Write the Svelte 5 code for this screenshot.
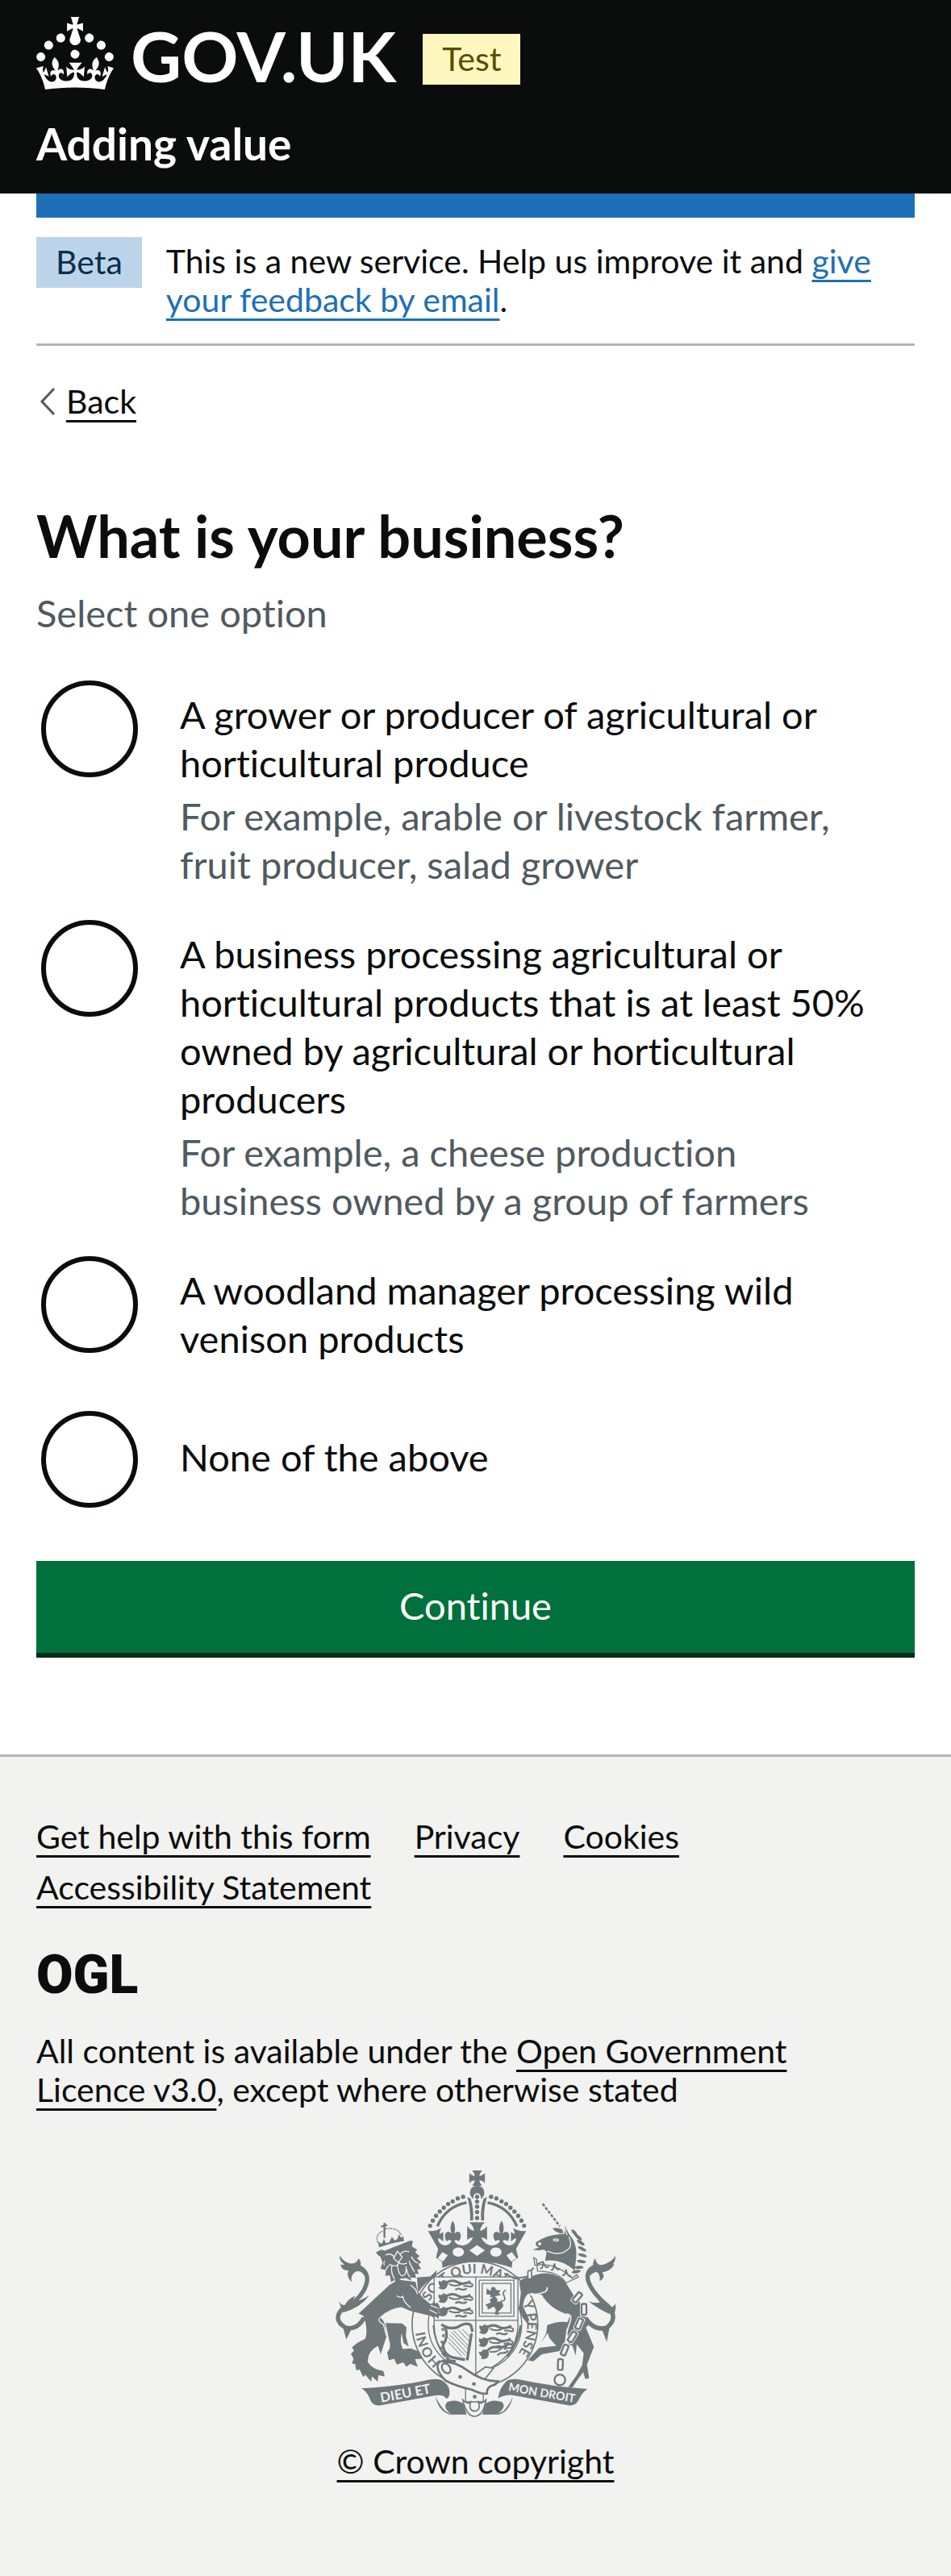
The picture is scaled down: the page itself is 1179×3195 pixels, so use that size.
<script>
  const options = [
    {
      id: 'grower',
      label: 'A grower or producer of agricultural or horticultural produce',
      hint: 'For example, arable or livestock farmer, fruit producer, salad grower',
    },
    {
      id: 'processor',
      label:
        'A business processing agricultural or horticultural products that is at least 50% owned by agricultural or horticultural producers',
      hint: 'For example, a cheese production business owned by a group of farmers',
    },
    { id: 'woodland', label: 'A woodland manager processing wild venison products' },
    { id: 'none', label: 'None of the above' },
  ];
  const links = ['Get help with this form', 'Privacy', 'Cookies', 'Accessibility Statement'];
  const archBeads = [[104, 239], [114, 220], [126, 202], [140, 186], [155, 172], [171, 158], [188, 148], [207, 137], [227, 131]];
  const chainLinks = [[262, 386, 40], [287, 430, 0], [269, 484, 24], [243, 533, 32], [215, 582, 22], [199, 636, 2]];
  const manes = [[252, 146, -40], [266, 162, -50], [275, 182, -55], [280, 205, -62], [281, 229, -72], [277, 252, -82], [268, 274, -92], [258, 290, -100]];
</script>

<header class="header">
  <div class="brand">
    <a class="home" href="#home" aria-label="GOV.UK">
      <svg class="crown" viewBox="0 0 32 30" aria-hidden="true">
        <path fill="currentColor" d="M22.6 10.4c-1 .4-2-.1-2.4-1-.4-.9.1-2 1-2.4.9-.4 2 .1 2.4 1s-.1 2-1 2.4m-5.9 6.7c-.9.4-2-.1-2.4-1-.4-.9.1-2 1-2.4.9-.4 2 .1 2.4 1s-.1 2-1 2.4m10.8-3.7c-1 .4-2-.1-2.4-1-.4-.9.1-2 1-2.4.9-.4 2 .1 2.4 1s0 2-1 2.4m3.3 4.8c-1 .4-2-.1-2.4-1-.4-.9.1-2 1-2.4.9-.4 2 .1 2.4 1s-.1 2-1 2.4M17 4.7l2.3 1.2V2.5l-2.3.7-.2-.2.9-3h-3.4l.9 3-.2.2c-.1.1-2.3-.7-2.3-.7v3.4L15 4.7c.1.1.1.2.2.2l-1.3 4c-.1.2-.1.4-.1.6 0 1.1.8 2 1.9 2.2h.7c1-.2 1.9-1.1 1.9-2.1 0-.2 0-.4-.1-.6l-1.3-4c-.1-.2 0-.2.1-.3m-7.6 5.7c.9.4 2-.1 2.4-1 .4-.9-.1-2-1-2.4-.9-.4-2 .1-2.4 1s0 2 1 2.4m-5 3c.9.4 2-.1 2.4-1 .4-.9-.1-2-1-2.4-.9-.4-2 .1-2.4 1s.1 2 1 2.4m-3.2 4.8c.9.4 2-.1 2.4-1 .4-.9-.1-2-1-2.4-.9-.4-2 .1-2.4 1s0 2 1 2.4m14.8 11c4.4 0 8.6.3 12.3.8 1.1-4.5 2.4-7 3.7-8.8l-2.5-.9c.2 1.3.3 1.9 0 2.7-.4-.4-.8-1.1-1.1-2.3l-1.2 4c.7-.5 1.3-.8 2-.9-1.1 2.5-2.6 3.1-3.5 3-1.1-.2-1.7-1.2-1.5-2.1.3-1.2 1.5-1.5 2.1-.1 1.1-2.3-.8-3-2-2.3 1.9-1.9 2.1-3.5.6-5.6-2.1 1.6-2.1 3.2-1.2 5.5-1.2-1.4-3.2-.6-2.5 1.6.9-1.4 2.1-.5 1.9.8-.2 1.1-1.7 2.1-3.5 1.9-2.7-.2-2.9-2.1-2.9-3.6.7-.1 1.9.5 2.9 1.9l.4-4.3c-1.1 1.1-2.1 1.4-3.2 1.4.4-1.2 2.1-3 2.1-3h-5.4s1.7 1.9 2.1 3c-1.1 0-2.1-.2-3.2-1.4l.4 4.3c1-1.4 2.2-2 2.9-1.9-.1 1.5-.2 3.4-2.9 3.6-1.9.2-3.4-.8-3.5-1.9-.2-1.3 1-2.2 1.9-.8.7-2.3-1.2-3-2.5-1.6.9-2.2.9-3.9-1.2-5.5-1.5 2-1.3 3.7.6 5.6-1.2-.7-3.1 0-2 2.3.6-1.4 1.8-1.1 2.1.1.2.9-.3 1.9-1.5 2.1-.9.2-2.4-.5-3.5-3 .6 0 1.2.3 2 .9l-1.2-4c-.3 1.1-.7 1.9-1.1 2.3-.3-.8-.2-1.4 0-2.7l-2.9.9C1.3 23 2.6 25.5 3.7 30c3.7-.5 7.9-.8 12.3-.8" />
      </svg>
      <span class="wordmark">GOV.UK</span>
    </a>
    <strong class="tag tag-test">Test</strong>
  </div>
  <a class="service" href="#service">Adding value</a>
</header>

<div class="container">
  <div class="bar"></div>
  <div class="phase">
    <strong class="tag tag-beta">Beta</strong>
    <p>This is a new service. Help us improve it and <a class="link-blue" href="#feedback">give your feedback by email</a>.</p>
  </div>

  <a class="back" href="#back">
    <svg viewBox="0 0 22 36" aria-hidden="true"><path d="M19 2 4 18l15 16" fill="none" stroke="#505a5f" stroke-width="3" /></svg>
    <span>Back</span>
  </a>

  <main>
    <form onsubmit={(e) => e.preventDefault()}>
      <fieldset aria-describedby="business-hint">
        <legend><h1>What is your business?</h1></legend>
        <p class="hint" id="business-hint">Select one option</p>
        <div class="radios">
          {#each options as option}
            <div class="option">
              <input type="radio" name="business" id={option.id} aria-describedby={option.hint ? `${option.id}-hint` : undefined} />
              <div class="option-text" class:single={!option.hint}>
                <label for={option.id}>{option.label}</label>
                {#if option.hint}<div class="hint" id="{option.id}-hint">{option.hint}</div>{/if}
              </div>
            </div>
          {/each}
        </div>
      </fieldset>
      <button type="submit">Continue</button>
    </form>
  </main>
</div>

<footer class="footer">
  <ul class="footer-links">
    {#each links as link}<li><a href="#footer">{link}</a></li>{/each}
  </ul>
  <div class="ogl">OGL</div>
  <p class="licence">All content is available under the <a href="#licence">Open Government Licence v3.0</a>, except where otherwise stated</p>

  <a class="copyright" href="#crown">
    <svg class="crest" viewBox="50 60 1046 922" aria-hidden="true">
      <defs>
        <g id="passant">
          <path class="ink" d="M4 6q8 4 12 2 6-10 12-2 12-2 10 12-2 16-14 20-14 2-22-6 8-2 6-8-6-4-4-18z" />
          <path class="line" stroke-width="9" d="M34 12q22-12 42 0t46-4" />
          <path class="line" stroke-width="6" d="M42 18q28 14 52-2 16-6 34 2 6 10-6 10-14-4-26-2" />
          <path class="line" stroke-width="7" d="M66 40q10-8 22-2 14 4 20-4" />
        </g>
        <g id="half-crown">
          {#each archBeads as [x, y]}<circle class="ink" cx={x} cy={y} r="8" />{/each}
          <path class="line" stroke-width="10" d="M131 241Q162 168 240 153" />
          <path class="ink" d="M242 132l13 6q12 35 9 81h-11q2-50-11-87z" />
          <path class="ink" d="M96 258Q122 262 146 248 138 262 140 270L153 262V298Q142 286 133 286 136 310 158 312 176 312 184 296 174 288 166 297 156 286 161 268 172 254 184 268 174 240 188 220 202 240 194 268 208 254 217 268 222 286 210 297 202 288 194 296 204 314 228 312 252 308 264 282 252 282 242 292V240Q255 256 268 258 266 240 250 226H280V372Q200 374 150 396L148 372 126 358 134 325Z" />
          <ellipse class="paper" cx="209" cy="337" rx="21" ry="17" />
          <path class="paper" d="M150 337l20 12-18 23-20-12z" />
        </g>
        <path id="garter-left" d="M445 776A188 188 0 0 1 418 526" />
        <path id="garter-top" d="M402 552A188 188 0 0 1 740 552" />
        <path id="garter-right" d="M748 556A190 190 0 0 1 600 824" />
        <path id="motto-left" d="M222 927Q330 908 440 886" />
        <path id="motto-right" d="M694 883Q820 908 970 932" />
      </defs>

      <g class="garter">
        <circle cx="571" cy="636" r="234" class="outline" stroke-width="5" />
        <circle cx="571" cy="636" r="174" class="outline" stroke-width="4" />
        <path class="line" stroke-width="9" d="M418 640Q420 700 462 758M742 640Q730 710 690 755" />
        <text><textPath href="#garter-left">HONI</textPath></text>
        <text><textPath href="#garter-top">SOIT QUI MAL</textPath></text>
        <text><textPath href="#garter-right">Y PENSE</textPath></text>
      </g>

      <g class="shield">
        <path class="outline" stroke-width="4" d="M419 460H731V640Q728 770 574 824 422 770 419 640Z" />
        <path class="line" stroke-width="4" d="M574 460V822M419 621H731" />
        <use href="#passant" x="432" y="468" />
        <use href="#passant" x="432" y="518" />
        <use href="#passant" x="432" y="568" />
        <use href="#passant" x="584" y="634" />
        <use href="#passant" x="582" y="682" />
        <use href="#passant" x="580" y="734" transform="rotate(-18 580 734)" />
        <path class="line" stroke-width="4" d="M587 472H716V606H587ZM598 484H705V594H598Z" />
        <path class="ink" d="M615 502l14 10 4-14q16-4 16 10l18 2-8 10 10 6-24 6q14 8 8 20l18-2 6 18-10 12-10 10 4 10h-16l4-18-8-12-22 12-2-12-8-6 22-10-6-8 14-12-12 2 2-10-16-2z" />
        <path class="line" stroke-width="5" d="M668 548q20 4 12-16-10-16 6-24" />
        <path class="line" stroke-width="10" d="M446 636Q476 658 508 646 540 626 556 640L562 664M460 646Q474 684 452 712 454 756 500 762L534 768M558 670L542 770" />
        <path class="line" stroke-width="9" stroke-dasharray="10 14" d="M450 650Q460 684 442 714 446 764 500 776" />
        <path class="line" stroke-width="3" d="M492 660l56 58M482 664l64 66M476 674l66 70M472 686l62 66M472 702l50 54M508 656l44 46M524 654l30 32" />
      </g>

      <g transform="translate(300 30)">
        <path class="ink" d="M261 33h37c-7 8-10 14-10 21 7-1 13-4 20-11v37c-7-7-13-10-20-10 0 7 3 13 10 20h-38c7-7 10-13 10-20-7 0-13 3-20 10V43c7 7 13 10 20 11 0-7-3-13-9-21z" />
        <circle class="ink" cx="279" cy="116" r="27" />
        <path class="paper" d="M265 220V132a14 14 0 0 1 28 0v88z" />
        {#each [131, 149, 168, 188, 210] as y}<circle class="ink" cx="279" cy={y} r="8" />{/each}
        <use href="#half-crown" />
        <use href="#half-crown" transform="translate(558 0) scale(-1 1)" />
        <path class="paper" d="M279 311l29 20-29 20-29-20z" />
      </g>

      <g transform="translate(30 240)">
        <path class="line" stroke-width="16" d="M128 372Q102 420 58 408 12 380 44 342 104 312 128 268 160 205 104 186" />
        <path class="ink" d="M37 140q14 24 40 30 26 0 30-20 12 12 8 26 34 20 31 50-22-34-50-26-20 14-14 38-22-20-12-42-30-2-29-24 8 4 14 2-20-14-18-34zM33 310q10 16 24 14 12-24 38-34-8 14-10 22 34-4 63-24-34 48-98 64zM50 408l12 44 18-36z" />
        <path class="ink" d="M325 222l50-4 24-24-4 24q-42 22-66 60z" />
        <path class="ink" d="M208 391l62 2 16 14-2 34 10 38-19-13-7-36q-8 34 4 58l30-2 32 12 12 26-28 2 10 28-28-10-14 10-12-16-24 8-10-22-20 6-6-30q14-14 10-34z" />
        <path class="ink" d="M222 250l33-20 65 8 8 38q20 26 46 44l28-4 8 14-6 12 6 16-6 18-10-10-6 6-12-8-36-8-40-10-32-14q-46 4-82 38 16 8 20 30l6 40-22 68-10-32q-40 20-38 60 16 28 58 34l5 20-24-4-2 24-22-20-2 20-22-26-8 8-14-28-12 4-4-24-12-2 6-18-10-18 12-12-8-12q18-18 50-32 8-24 0-64l-8-22-17-8z" />
        <path class="cut" stroke-width="4" d="M250 290q14 10 22 2 4 24 30 42M300 250q24 14 26 34M186 372q-8 14 14 24l12 44M376 326l26 10M372 342l28 14" />
        <path class="ink" d="M172 128l20-10 13 4 95-38 10 2-4 20 20 12-8 10 17 14-10 8 16 15-11 7 11 18-15 2 6 18-14-3 4 16-22-1 5 12-20-10-22 2-12 22-9-17-13 8-5-25-20 2 3-22-18-5 8-23-8-22q-12-4-18-20z" />
        <path class="cut" stroke-width="4" d="M208 138q22-10 34 10M262 136q14-18 34-10M238 150l14-26 18 22-14 20zM222 172q28 16 36-6 10 10 30 2M252 172q4 40 18 44 18-4 14-36M232 178q-6 24 10 50M222 176q-18 14-16 40M296 160q8 24 20 40M304 144q10 20 26 24M286 190q4 20 12 30M204 160q-4 10 0 16" />
        <path class="ink" d="M184 110l-4-22 14 8 8-18 8 16 12-4 10-20 10 14 10-6 6-18 8 14 8-6 3 18q-50 8-93 24z" />
        <path class="line" stroke-width="5" stroke-dasharray="5 4" d="M178 90q-8-34 24-42M208 40q44-6 60 24" />
        <path class="line" stroke-width="7" d="M204 18v56M192 32l22-6" />
      </g>

      <g transform="translate(690 150)">
        <path class="line" stroke-width="16" d="M292 462Q326 514 372 498 410 470 386 428 300 356 300 306 304 270 350 276" />
        <path class="ink" d="M329 240q4 26 24 25 34-8 52-34-2 24-12 32 6 0 8-2-12 26-46 32 14 20-10 32 4-26-12-34-24 6-38 36-8-46 26-62-2-14 8-25zM303 400q24 10 44 4-8-6-10-14 34 6 54 34l13-14q4 24-8 42-40-12-93-52zM354 506l18 46 10-56z" />
        <path class="line" stroke-width="8" stroke-dasharray="11 6" d="M133 37l64 84" />
        <path class="ink" d="M170 128q18-4 36 4l4 16q-30 0-40-20z" />
        <path class="ink" d="M108 180Q150 152 200 150L214 150 216 120 234 154Q262 184 258 236L252 286Q200 240 142 250L148 216 138 208 118 210 95 208 120 200Q104 194 108 180Z" />
        {#each manes as [x, y, a]}<ellipse class="ink" cx={x} cy={y} rx="6" ry="17" transform="rotate({a} {x} {y})" />{/each}
        <circle class="paper" cx="122" cy="186" r="6" />
        <path class="cut" stroke-width="4" d="M172 172q10-8 20 0-8 8-20 0M150 214q54 22 84-14 8-20-4-40M216 128l8 26" />
        <path class="ink" d="M46 330q10-20 44-20 20-14 60-14 50 6 72 40l28 44q30 24 32 56l22 52-10 10q14 36 30 72l-26 66 8 50-14 4-8-26-22 30-18 28-16-2 30-42 22-40 6-44-26-34-4 42-12-36-14-4-8-76 14-34q-74-20-106-76l-46-8q-22 14-24 52l22 46-2 22-22-28-14-30 8-62z" />
        <path class="ink" d="M150 490q36-16 76-12l-12 84-18 24-66 12-32 26-20-4 18-20 24-26 64-8-26-28-6-20-24 36 18-34z" />
        <path class="cut" stroke-width="5" d="M84 376q30 0 60-12 8-8 6-16M222 446q22 4 14 28l-14 44" />
        <path class="outline" stroke-width="4" d="M100 238l10 6 4 44q78 0 106 44l46-22-6-8-18 12q-60-60-138-48z" />
        <path class="line" stroke-width="6" d="M112 262l24-10M124 276q8 8 12-20 8 26 20 14M164 282q10 8 12-22 6 28 22 20M206 302q12 6 14-20 4 28 20 24M-10 296l40 20 60-10M84 290l16-14" />
        <rect class="outline" stroke-width="5" x="78" y="286" width="14" height="32" rx="6" />
        {#each chainLinks as [x, y, a]}
          <g transform="rotate({a} {x} {y})">
            <rect class="paper" x={x - 15} y={y - 26} width="30" height="52" rx="8" />
            <rect class="outline" stroke-width="7" x={x - 9} y={y - 20} width="18" height="40" rx="5" />
          </g>
        {/each}
        <circle class="outline" stroke-width="7" cx="197" cy="693" r="20" />
      </g>

      <g>
        <path class="ink" d="M424 905Q436 962 478 972H540L528 932Q500 912 468 926 448 946 482 970L462 960Q440 940 424 905ZM712 905Q700 962 660 972H598L610 932Q638 912 672 926 690 946 654 970L676 960Q698 940 712 905Z" />
        <path class="outline" stroke-width="4" d="M536 860H602V925H536Z" />
        <path class="outline" stroke-width="5" d="M526 918Q540 980 570 979 602 978 612 918 600 930 588 930L582 922Q596 956 570 960 544 956 556 922L550 930Q538 930 526 918Z" />
        <path class="outline" stroke-width="5" d="M572 822L610 795 640 800 600 850Z" />
        <path class="outline" stroke-width="8" d="M452 776Q500 776 540 806 600 850 656 848 650 862 634 864 614 872 616 894 596 898 560 880 500 866 462 846 424 808 434 782 450 764 500 774" />
        <ellipse class="outline" stroke-width="7" cx="464" cy="800" rx="14" ry="20" transform="rotate(-35 464 800)" />
        <circle class="ink" cx="516" cy="832" r="7" /><circle class="ink" cx="567" cy="858" r="7" /><circle class="ink" cx="570" cy="906" r="7" />
        <path class="ink" d="M148 875Q290 868 400 842 436 836 450 846 480 866 476 892 478 906 464 914 456 896 420 902L220 938Q192 942 182 920 172 888 148 875Z" />
        <path class="ink" d="M990 877Q860 868 740 842 706 836 690 846 662 872 657 912 690 894 720 902L918 938Q944 942 956 920 968 892 990 877Z" />
        <text class="motto"><textPath href="#motto-left">DIEU ET</textPath></text>
        <text class="motto motto-small"><textPath href="#motto-right">MON DROIT</textPath></text>
      </g>
    </svg>
    <span>© Crown copyright</span>
  </a>
</footer>

<style>
  :global(body) {
    background: #fff;
    color: #0b0c0c;
    font-family: Lato, "Open Sans", sans-serif;
    font-size: 41px;
    line-height: 48px;
    font-variant-ligatures: none;
  }
  p, h1, ul { margin: 0; padding: 0; }
  a {
    color: inherit;
    text-decoration-thickness: 3px;
    text-underline-offset: 8px;
  }
  .header {
    background: #0b0c0c;
    color: #fff;
    padding: 21px 45px 27px;
  }
  .brand { display: flex; align-items: flex-start; gap: 33px; }
  .home { display: flex; gap: 21px; color: #fff; text-decoration: none; }
  .crown { width: 96px; height: 90px; display: block; }
  .wordmark { font-size: 87px; line-height: 84px; font-weight: 700; padding-top: 6px; }
  .tag { font-weight: 400; padding: 7px 24px 8px; line-height: 48px; }
  .tag-test { background: #fff7bf; color: #594d00; margin-top: 21px; }
  .tag-beta { background: #bbd4ea; color: #0c2d4a; }
  .service {
    display: block;
    width: fit-content;
    margin-top: 33px;
    font-size: 55px;
    line-height: 69px;
    font-weight: 700;
    text-decoration: none;
  }
  .container { padding: 0 45px; }
  .bar { height: 30px; background: #1d70b8; }
  .phase {
    display: flex;
    align-items: flex-start;
    gap: 30px;
    padding: 24px 0 30px;
    border-bottom: 3px solid #b1b4b6;
  }
  .phase p { padding-top: 6px; }
  .link-blue { color: #1d70b8; }
  .back {
    display: flex;
    width: fit-content;
    align-items: center;
    gap: 12px;
    margin-top: 45px;
    text-decoration: none;
  }
  .back svg { width: 22px; height: 36px; margin-left: 3px; }
  .back span { text-decoration: underline 3px; text-underline-offset: 8px; }
  main { padding: 105px 0 120px; }
  fieldset { border: 0; margin: 0; padding: 0; min-width: 0; }
  legend { padding: 0; display: block; }
  h1 { font-size: 72px; line-height: 75px; font-weight: 700; }
  .hint { color: #505a5f; font-size: 47px; line-height: 60px; }
  fieldset > .hint { margin-top: 28px; }
  .radios { display: flex; flex-direction: column; gap: 30px; margin-top: 48px; }
  .option { display: flex; align-items: flex-start; gap: 52px; }
  input {
    appearance: none;
    flex: none;
    box-sizing: border-box;
    width: 120px;
    height: 120px;
    margin: 6px 0 6px 6px;
    border: 6px solid #0b0c0c;
    border-radius: 50%;
    background: #fff;
  }
  .option-text {
    flex: 1;
    box-sizing: border-box;
    min-height: 132px;
    display: flex;
    flex-direction: column;
    justify-content: center;
    gap: 6px;
    padding: 18px 45px 3px 0;
  }
  .option-text.single { padding-bottom: 24px; }
  label { font-size: 47px; line-height: 60px; }
  button {
    display: block;
    width: 100%;
    margin-top: 60px;
    padding: 22px 30px 32px;
    border: 0;
    box-shadow: inset 0 -6px 0 #002d18;
    background: #00703c;
    color: #fff;
    font: inherit;
    font-size: 47px;
    line-height: 66px;
  }
  .footer {
    background: #f2f2f0;
    border-top: 3px solid #b1b4b6;
    padding: 75px 45px 118px;
  }
  .footer-links { list-style: none; display: flex; flex-wrap: wrap; gap: 15px 54px; }
  .ogl { font-family: Roboto, Lato, sans-serif; font-size: 66px; line-height: 50px; font-weight: 900; margin: 60px 0 45px; }
  .licence { padding-right: 45px; }
  .copyright {
    display: flex;
    flex-direction: column;
    align-items: center;
    width: fit-content;
    margin: 75px auto 0;
    text-decoration: none;
  }
  .copyright span { text-decoration: underline 3px; text-underline-offset: 8px; margin-top: 31px; }
  .crest { width: 349px; height: 307px; }
  .ink { fill: #6e787a; }
  .paper { fill: #f2f2f0; }
  .line { fill: none; stroke: #6e787a; }
  .outline { fill: #f2f2f0; stroke: #6e787a; }
  .cut { fill: none; stroke: #f2f2f0; }
  .garter text { fill: #6e787a; font-size: 50px; font-weight: 700; }
  .motto { fill: #f2f2f0; font-size: 50px; font-weight: 700; }
  .motto-small { font-size: 43px; }
</style>
